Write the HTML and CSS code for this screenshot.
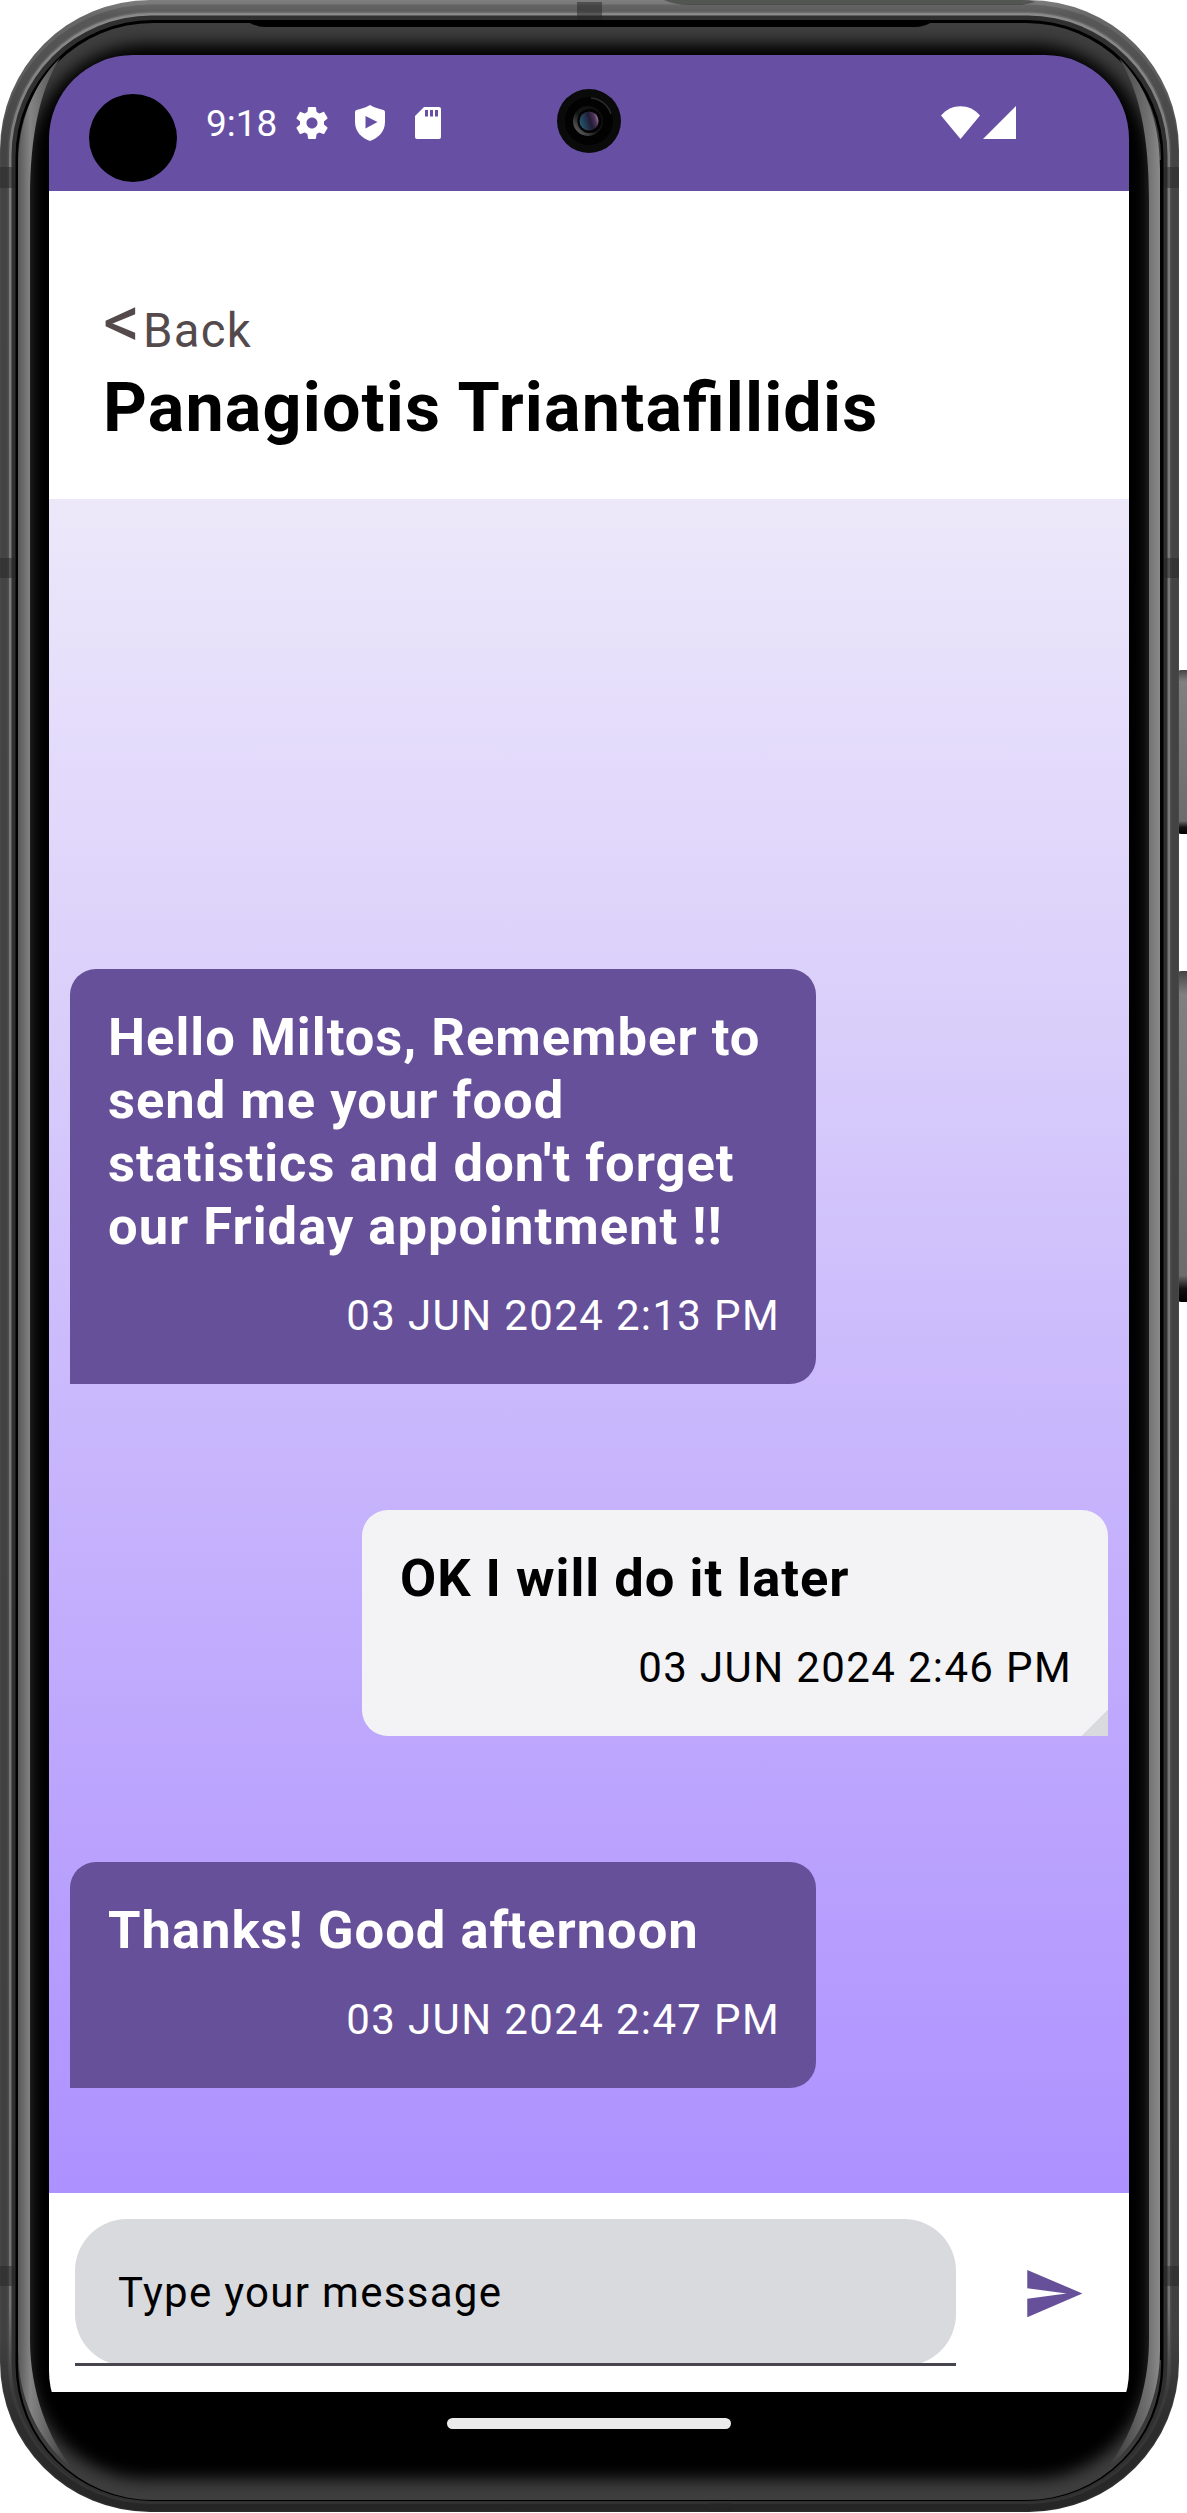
FILE: index.html
```html
<!DOCTYPE html>
<html lang="en">
<head>
<meta charset="utf-8">
<title>Chat</title>
<link rel="stylesheet" href="styles.css">
</head>
<body>
<div class="phone">
  <svg class="frame" viewBox="0 0 1187 2513" aria-hidden="true">
    <defs>
      <linearGradient id="rim" x1="0" y1="0" x2="0" y2="1">
        <stop offset="0" stop-color="#7e7e7e"/><stop offset=".006" stop-color="#686868"/><stop offset=".06" stop-color="#505050"/><stop offset=".93" stop-color="#4c4c4c"/><stop offset=".96" stop-color="#383838"/><stop offset="1" stop-color="#2c2c2c"/>
      </linearGradient>
      <linearGradient id="shine" x1="0" y1="0" x2="0" y2="1">
        <stop offset="0" stop-color="#8a8a8a"/><stop offset=".06" stop-color="#7c7c7c"/><stop offset=".92" stop-color="#747474"/><stop offset=".955" stop-color="#3a3a3a"/><stop offset="1" stop-color="#333"/>
      </linearGradient>
      <linearGradient id="edgeL"><stop offset="0" stop-color="#585858"/><stop offset=".22" stop-color="#848484"/><stop offset="1" stop-color="#333"/></linearGradient>
      <linearGradient id="edgeR"><stop offset="0" stop-color="#333"/><stop offset=".78" stop-color="#707070"/><stop offset="1" stop-color="#8a8a8a"/></linearGradient>
      <linearGradient id="key" x1="0" y1="0" x2="0" y2="1"><stop offset="0" stop-color="#444"/><stop offset=".07" stop-color="#808080"/><stop offset=".92" stop-color="#6c6c6c"/><stop offset=".96" stop-color="#111"/><stop offset="1" stop-color="#000"/></linearGradient>
      <filter id="soft" x="-5%" y="-5%" width="110%" height="110%"><feGaussianBlur stdDeviation="8"/></filter>
      <clipPath id="glass"><rect x="18" y="23" width="1143" height="2477" rx="135"/></clipPath>
    </defs>
    <rect x="1178" y="670" width="12" height="164" rx="3" fill="url(#key)"/>
    <rect x="1178" y="971" width="12" height="331" rx="3" fill="url(#key)"/>
    <rect width="1179" height="2512" rx="150" fill="url(#rim)"/>
    <path d="M664 0H1022Q1030 0 1036 2L1022 5H690Q675 5 664 0Z" fill="#535553"/>
    <rect x="4" y="8" width="1171" height="2499" rx="147" fill="none" stroke="#000" stroke-opacity=".15" stroke-width="7"/>
    <rect x="9" y="13" width="1161" height="2491" rx="142" fill="url(#shine)"/>
    <rect x="11.500" y="15.500" width="1156" height="2487" rx="140" fill="#303030"/>
    <rect x="15.500" y="20" width="1148" height="2481" rx="137" fill="#000"/>
    <g fill="#252525" fill-opacity=".5">
      <path d="M0 167h15v21H0zM0 558h15v20H0zM0 2266h15v20H0zM1164 167h15v21h-15zM1164 558h15v20h-15zM1164 2266h15v20h-15zM577 2h25v18h-25zM708 2503h25v9h-25z"/>
    </g>
    <g clip-path="url(#glass)">
      <rect x="18" y="23" width="1143" height="2477" fill="#3e3e3e"/>
      <rect x="29" y="44" width="1121" height="2435" rx="118" fill="#020202" filter="url(#soft)"/>
      <path d="M18 160H30V2360H18zM1149 160h12v2200h-12z" fill="#020202"/>
      <path d="M248 22Q257 27 265 27H915Q924 27 932 22Z" fill="#000"/>
    </g>
    <path d="M18 170C18 118 35 83 60 58C40 90 30 135 30 200V2340C30 2390 48 2440 74 2470C36 2440 18 2395 18 2350Z" fill="url(#edgeL)"/>
    <path d="M1160 170C1160 118 1144 83 1119 58C1139 90 1149 135 1149 200V2340C1149 2390 1131 2440 1105 2470C1143 2440 1160 2395 1160 2350Z" fill="url(#edgeR)"/>
  </svg>

  <main class="screen">
    <div class="status">
      <span class="cutout"></span>
      <span class="time">9:18</span>
      <svg class="gear" viewBox="0 0 24 24"><path d="M19.14 12.94c.04-.3.06-.61.06-.94 0-.32-.02-.64-.07-.94l2.03-1.58c.18-.14.23-.41.12-.61l-1.92-3.32c-.12-.22-.37-.29-.59-.22l-2.39.96c-.5-.38-1.03-.7-1.62-.94l-.36-2.54c-.04-.24-.24-.41-.48-.41h-3.84c-.24 0-.43.17-.47.41l-.36 2.54c-.59.24-1.13.57-1.62.94l-2.39-.96c-.22-.08-.47 0-.59.22L2.74 8.87c-.12.21-.08.47.12.61l2.03 1.58c-.05.3-.09.63-.09.94s.02.64.07.94l-2.03 1.58c-.18.14-.23.41-.12.61l1.92 3.32c.12.22.37.29.59.22l2.39-.96c.5.38 1.03.7 1.62.94l.36 2.54c.05.24.24.41.48.41h3.84c.24 0 .44-.17.47-.41l.36-2.54c.59-.24 1.13-.56 1.62-.94l2.39.96c.22.08.47 0 .59-.22l1.92-3.32c.12-.22.07-.47-.12-.61l-2.01-1.58zM12 15.300c-1.820 0-3.300-1.480-3.300-3.300s1.480-3.300 3.300-3.300 3.300 1.480 3.300 3.300-1.480 3.300-3.300 3.300z"/></svg>
      <svg class="shield" viewBox="0 0 30 36"><path fill-rule="evenodd" d="M15 0C10 3 5 4 1.500 5Q0 5.500 0 7V17C0 27 7 33 15 36C23 33 30 27 30 17V7Q30 5.500 28.500 5C25 4 20 3 15 0ZM10.500 11V23.500L22.500 17Z"/></svg>
      <svg class="card" viewBox="0 0 26 32"><path fill-rule="evenodd" d="M9 0H24Q26 0 26 2V30Q26 32 24 32H2Q0 32 0 30V9ZM10 3V9.500H13V3ZM15 3V9.500H18V3ZM20 3V9.500H23V3Z"/></svg>
      <svg class="wifi" viewBox="0 0 39 33"><path d="M0 9.500C10-3 29-3 39 9.500L19.500 33Z"/></svg>
      <svg class="signal" viewBox="0 0 33 33"><path d="M33 0V33H0Z"/></svg>
      <svg class="lens" viewBox="0 0 64 64" aria-hidden="true">
        <defs>
          <linearGradient id="ring" x1="0" y1="1" x2="1" y2="0"><stop offset="0" stop-color="#777"/><stop offset=".45" stop-color="#161616"/><stop offset="1" stop-color="#0b0b0b"/></linearGradient>
          <linearGradient id="iris" x1="0" y1=".6" x2="1" y2=".3"><stop offset="0" stop-color="#235a72"/><stop offset=".55" stop-color="#221b33"/><stop offset=".8" stop-color="#4a3356"/><stop offset="1" stop-color="#b884ba"/></linearGradient>
        </defs>
        <circle class="body" cx="32" cy="32" r="32"/><circle class="bowl" cx="32" cy="32" r="24"/>
        <path class="glint" d="M34 9A23 23 0 0 1 54 25"/>
        <circle cx="31" cy="32" r="15" fill="url(#ring)"/><circle class="bowl" cx="32.500" cy="32" r="12"/><circle cx="32" cy="32" r="9.500" fill="url(#iris)"/>
      </svg>
    </div>

    <header class="header">
      <div class="back"><span class="chevron">&lt;</span><span>Back</span></div>
      <h1 class="name">Panagiotis Trianta<span class="joined">fi</span>llidis</h1>
    </header>

    <section class="chat">
      <article class="bubble received">
        <p class="text">Hello Miltos, Remember to send me your food statistics and don't forget our Friday appointment !!</p>
        <time class="date">03 JUN 2024 2:13 PM</time>
      </article>
      <article class="bubble sent">
        <p class="text">OK I will do it later</p>
        <time class="date">03 JUN 2024 2:46 PM</time>
      </article>
      <article class="bubble received">
        <p class="text">Thanks! Good a<span class="joined">ft</span>ernoon</p>
        <time class="date">03 JUN 2024 2:47 PM</time>
      </article>
    </section>

    <footer class="composer">
      <div class="field"><span class="hint">Type your message</span></div>
      <svg class="send" viewBox="0 0 24 24"><path d="M2.010 21L23 12 2.010 3 2 10l15 2-15 2z"/></svg>
    </footer>
    <div class="nav"><span class="handle"></span></div>
  </main>
</div>
</body>
</html>
```
FILE: styles.css
```css
* { box-sizing: border-box; }
body { margin: 0; background: #fff; font-family: Roboto, "Liberation Sans", sans-serif; }
.phone { position: relative; width: 1187px; height: 2513px; padding: 55px 58px 58px 49px; overflow: hidden; }
.frame { position: absolute; inset: 0; width: 1187px; height: 2513px; }
.screen { position: relative; display: flex; flex-direction: column; width: 1080px; height: 2400px; border-radius: 84px; overflow: hidden; background: #000; }

.status { position: relative; display: flex; align-items: center; flex: none; height: 136px; padding: 0 113px 0 40px; background: #6750a3; color: #fff; }
.status svg { flex: none; fill: currentColor; }
.cutout { width: 88px; height: 88px; margin-top: 30px; border-radius: 50%; background: #000; }
.time { width: 79px; margin: 2px 0 0 29px; font-size: 37px; line-height: 44px; white-space: nowrap; }
.gear { width: 40px; height: 40px; margin-left: 7px; }
.shield { width: 30px; height: 36px; margin-left: 23px; }
.card { width: 26px; height: 32px; margin-left: 30px; }
.wifi { width: 39px; height: 33px; margin-left: auto; }
.signal { width: 33px; height: 33px; margin-left: 3px; }
.wifi, .signal { position: relative; top: -1px; }
.status .lens { position: absolute; left: 508px; top: 34px; width: 64px; height: 64px; }
.body { fill: #0a0a0a; }
.bowl { fill: #020202; }
.glint { fill: none; stroke: #2c2c2c; stroke-width: 1.5; }

.header { flex: none; height: 308px; padding: 103px 54px 0; background: #fff; }
.back { display: flex; align-items: baseline; height: 74px; color: #544a4c; font-size: 47.25px; line-height: 56px; letter-spacing: 1.3px; }
.chevron { width: 40px; font-size: 74px; font-weight: 450; }
.name { margin: 0; font-size: 68.25px; line-height: 80px; font-weight: 700; letter-spacing: 1.15px; white-space: nowrap; color: #000; }
.joined { letter-spacing: 0; margin-right: 1px; }

.chat { display: flex; flex-direction: column; justify-content: flex-end; gap: 126px; flex: none; height: 1694px; padding: 0 21px 105px; background: linear-gradient(#ece8f9, #e4dcfb 14%, #dacffa 30%, #ccbbfc 50%, #bea8fd 72%, #ad91ff); }
.bubble { width: 746px; padding: 37px 36px 44px 38px; border-radius: 26px; }
.received { align-self: flex-start; border-bottom-left-radius: 0; background: #665099; color: #fff; }
.sent { align-self: flex-end; border-bottom-right-radius: 0; background: linear-gradient(315deg, #d9dade 18.7px, #f3f3f6 19px); color: #000; }
.text { margin: 0; font-size: 52.5px; line-height: 63px; font-weight: 700; letter-spacing: 1px; }
.date { display: block; margin-top: 33px; text-align: right; font-size: 42px; line-height: 49px; letter-spacing: 1.36px; }

.composer { display: flex; flex: none; height: 199px; padding: 26px 44px 26px 26px; justify-content: space-between; align-items: center; background: #fff; }
.field { position: relative; display: flex; align-items: center; width: 881px; height: 147px; padding-left: 43px; background: #d9dade; border-radius: 52px; }
.field::after { content: ""; position: absolute; left: 0; right: 0; bottom: 0; height: 3px; background: #49454f; }
.hint { font-size: 42px; line-height: 49px; letter-spacing: 1.3px; color: #000; }
.send { width: 63px; height: 63px; fill: #665099; position: relative; top: 1px; }
.nav { display: flex; justify-content: center; flex: none; height: 65px; padding-top: 26px; background: #000; }
.handle { width: 284px; height: 11px; border-radius: 6px; background: #ebebeb; }
```
